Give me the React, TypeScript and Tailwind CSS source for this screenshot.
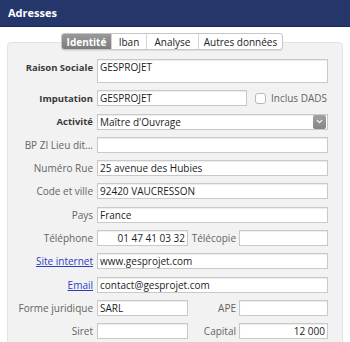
import { ChevronDown } from "lucide-react";

const field =
  "h-[16px] bg-white border border-[#c9c9c9] shadow-[inset_0_1px_1px_rgba(0,0,0,0.08)] px-[2px] flex items-center text-[10px] text-[#1c1c1c] leading-none";

function Label({ children, bold, link }: { children: string; bold?: boolean; link?: boolean }) {
  return (
    <div
      className={
        "text-right leading-none whitespace-nowrap " +
        (bold
          ? "text-[9.5px] font-bold text-[#3a3a3a]"
          : link
          ? "text-[10px] text-[#2b3fc4] underline"
          : "text-[10px] text-[#646464]")
      }
    >
      {children}
    </div>
  );
}

function Row({ label, bold, link, children }: { label: string; bold?: boolean; link?: boolean; children: React.ReactNode }) {
  return (
    <div className="grid grid-cols-[84px_1fr] gap-x-[4px] items-center">
      <Label bold={bold} link={link}>{label}</Label>
      {children}
    </div>
  );
}

const tabs = ["Identité", "Iban", "Analyse", "Autres données"];

export default function App() {
  return (
    <div className="w-[350px] h-[342px] bg-white overflow-hidden font-['Open_Sans',sans-serif]">
      {/* Title bar */}
      <div className="h-[27px] bg-[#24366a] flex items-center px-[8px] text-white text-[11px] font-bold border-b border-[#1a2750]">
        Adresses
      </div>

      {/* Panel */}
      <div className="mx-[7px] mt-[15px] h-[320px] rounded-[4px] border border-[#e3e3e3] bg-[#f2f2f2] pl-[1px] pr-[14px]">
        {/* Segmented tabs */}
        <div className="-mt-[10px] flex justify-center pl-[7px]">
          <div className="flex h-[17px] rounded-[3px] border border-[#c6c6c6] bg-white text-[10px] leading-none shadow-[0_1px_1px_rgba(0,0,0,0.08)] overflow-hidden">
            {tabs.map((t, i) => (
              <div
                key={t}
                className={
                  "flex items-center justify-center " +
                  (i === 0
                    ? "w-[49px] bg-gradient-to-b from-[#9a9a9a] to-[#7c7c7c] text-white font-bold"
                    : "text-[#222] border-l border-[#d4d4d4] " +
                      (i === 1 ? "w-[35px]" : i === 2 ? "w-[52px]" : "w-[84px]"))
                }
              >
                {t}
              </div>
            ))}
          </div>
        </div>

        <div className="mt-[9px] flex flex-col gap-y-[7.3px]">
          <div className="grid grid-cols-[84px_1fr] gap-x-[4px] items-start">
            <div className="pt-[4px]">
              <Label bold>Raison Sociale</Label>
            </div>
            <div className={field.replace("h-[16px]", "h-[24px]").replace("items-center", "items-start") + " pt-[2px]"}>
              GESPROJET
            </div>
          </div>

          <Row label="Imputation" bold>
            <div className="flex items-center">
              <div className={field + " w-[150px]"}>GESPROJET</div>
              <div className="ml-[8px] w-[11px] h-[11px] rounded-[3px] border border-[#b9b9b9] bg-white" />
              <span className="ml-[5px] text-[10px] text-[#646464] leading-none">Inclus DADS</span>
            </div>
          </Row>

          <Row label="Activité" bold>
            <div className={field + " justify-between pr-0"}>
              <span>Maître d'Ouvrage</span>
              <span className="h-[14px] w-[13px] mr-[1px] rounded-[2px] bg-gradient-to-b from-[#a2a2a2] to-[#858585] flex items-center justify-center">
                <ChevronDown className="w-[9px] h-[9px] text-white" strokeWidth={3} />
              </span>
            </div>
          </Row>

          <Row label="BP ZI Lieu dit...">
            <div className={field} />
          </Row>

          <Row label="Numéro Rue">
            <div className={field}>25 avenue des Hubies</div>
          </Row>

          <Row label="Code et ville">
            <div className={field}>92420 VAUCRESSON</div>
          </Row>

          <Row label="Pays">
            <div className={field}>France</div>
          </Row>

          <Row label="Téléphone">
            <div className="grid grid-cols-[91px_1fr_92px] items-center">
              <div className={field + " justify-end"}>01 47 41 03 32</div>
              <Label>Télécopie</Label>
              <div className={field + " ml-[3px]"} />
            </div>
          </Row>

          <Row label="Site internet" link>
            <div className={field}>www.gesprojet.com</div>
          </Row>

          <Row label="Email" link>
            <div className={field}>contact@gesprojet.com</div>
          </Row>

          <Row label="Forme juridique">
            <div className="grid grid-cols-[91px_1fr_92px] items-center">
              <div className={field}>SARL</div>
              <Label>APE</Label>
              <div className={field + " ml-[3px]"} />
            </div>
          </Row>

          <Row label="Siret">
            <div className="grid grid-cols-[91px_1fr_92px] items-center">
              <div className={field} />
              <Label>Capital</Label>
              <div className={field + " ml-[3px] justify-end"}>12 000</div>
            </div>
          </Row>
        </div>
      </div>
    </div>
  );
}
